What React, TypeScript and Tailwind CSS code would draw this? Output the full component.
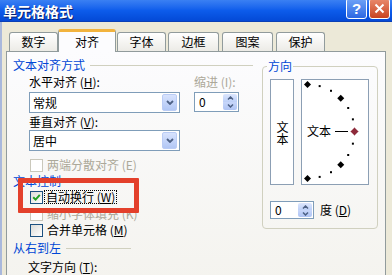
import React from "react";

const U = ({ c }: { c: string }) => <span className="underline">{c}</span>;

function Checkbox({ checked = false, disabled = false }: { checked?: boolean; disabled?: boolean }) {
  return (
    <span
      className={
        disabled
          ? "relative inline-block shrink-0 w-[13px] h-[13px] border border-[#CAC8BB] bg-white"
          : "relative inline-block shrink-0 w-[13px] h-[13px] border border-[#1C5180] bg-gradient-to-br from-[#DCDCD7] to-white"
      }
    >
      {checked && (
        <svg className="absolute left-[1px] top-[1px]" width="9" height="9" viewBox="0 0 9 9">
          <path d="M1.2 4.2 L3.6 6.6 L7.8 1.8" stroke="#21A121" strokeWidth="2" fill="none" />
        </svg>
      )}
    </span>
  );
}

function Select({ value }: { value: string }) {
  return (
    <div className="flex items-center w-[151px] h-[21px] border border-[#7F9DB9] bg-white pl-[3px] pr-[2px]">
      <span className="flex-1">{value}</span>
      <span className="flex items-center justify-center w-[15px] h-[17px] rounded-[2px] border border-[#BACCF5] bg-gradient-to-b from-[#D8E3FD] to-[#B2C7F5]">
        <svg width="8" height="5" viewBox="0 0 8 5">
          <path d="M1 1 L4 4 L7 1" stroke="#4D6185" strokeWidth="1.8" fill="none" />
        </svg>
      </span>
    </div>
  );
}

function Spin({ cls }: { cls: string }) {
  return (
    <div className={cls}>
      <span className="flex-1">0</span>
      <div className="flex flex-col w-[14px] self-stretch my-[1px]">
        <span className="flex-1 flex items-center justify-center rounded-t-[2px] bg-gradient-to-b from-[#DCE6FD] to-[#BDD0F8]">
          <svg width="7" height="4" viewBox="0 0 7 4">
            <path d="M1 3.5 L3.5 1 L6 3.5" stroke="#4D6185" strokeWidth="1.5" fill="none" />
          </svg>
        </span>
        <span className="flex-1 flex items-center justify-center rounded-b-[2px] bg-gradient-to-b from-[#C8D7FA] to-[#AFC4F4]">
          <svg width="7" height="4" viewBox="0 0 7 4">
            <path d="M1 0.5 L3.5 3 L6 0.5" stroke="#4D6185" strokeWidth="1.5" fill="none" />
          </svg>
        </span>
      </div>
    </div>
  );
}

function Tab({ label, cls, selected = false }: { label: string; cls: string; selected?: boolean }) {
  return (
    <div
      className={
        selected
          ? `${cls} relative z-10 h-[23px] -mb-px flex items-center justify-center rounded-t-[3px] border-x border-[#919B9C] border-t-[3px] border-t-[#F2B33D] bg-[#FCFCFE]`
          : `${cls} h-[19px] flex items-center justify-center rounded-t-[3px] border-x border-t border-[#919B9C] bg-gradient-to-b from-white to-[#ECEBE6]`
      }
    >
      {label}
    </div>
  );
}

function Arc() {
  const cx = 5.5;
  const cy = 51.5;
  const r = 47;
  const items: React.ReactNode[] = [];
  for (let a = -90; a <= 90; a += 15) {
    const rad = (a * Math.PI) / 180;
    const x = cx + r * Math.cos(rad);
    const y = cy - r * Math.sin(rad);
    if (a === 0) {
      items.push(
        <polygon
          key={a}
          points={`${x},${y - 4} ${x + 4},${y} ${x},${y + 4} ${x - 4},${y}`}
          fill="#8E2A3A"
          stroke="#C9A0A8"
          strokeWidth="0.6"
        />
      );
    } else if (a % 45 === 0) {
      items.push(
        <polygon key={a} points={`${x},${y - 3.5} ${x + 3.5},${y} ${x},${y + 3.5} ${x - 3.5},${y}`} fill="#000" />
      );
    } else {
      items.push(<rect key={a} x={x - 1} y={y - 1} width="2" height="2" fill="#000" />);
    }
  }
  return (
    <svg width="66" height="104" viewBox="0 0 66 104">
      <text x="5" y="56" fontSize="12" fontFamily="Noto Sans CJK SC, sans-serif" fill="#000">
        文本
      </text>
      <line x1="33" y1="51.5" x2="46" y2="51.5" stroke="#000" strokeWidth="1" />
      {items}
    </svg>
  );
}

export default function App() {
  return (
    <div className="relative w-[392px] h-[275px] overflow-hidden bg-[#ECE9D8] font-['Noto_Sans_CJK_SC',sans-serif] text-[12px] leading-[14px] text-black">
      {/* Title bar */}
      <div className="h-[22px] flex items-start justify-between bg-gradient-to-b from-[#3A80F3] via-[#0D5CEB] to-[#0449D6] border-b border-[#0A3FB5]">
        <span className="pl-[3px] pt-[3px] text-white font-bold text-[14px] leading-[16px] [text-shadow:1px_1px_#0A1F6E]">
          单元格格式
        </span>
        <div className="flex gap-[2px] pr-[2px] -mt-[2px]">
          <div className="w-[21px] h-[21px] rounded-[3px] border border-white bg-gradient-to-b from-[#6FA3F7] to-[#2C67E2] flex items-center justify-center text-white font-bold text-[15px] leading-[15px] font-['Liberation_Sans',sans-serif]">
            ?
          </div>
          <div className="w-[21px] h-[21px] rounded-[3px] border border-white bg-gradient-to-b from-[#E98A6C] to-[#C8421F] flex items-center justify-center">
            <svg width="11" height="11" viewBox="0 0 11 11">
              <path d="M1.5 1.5 L9.5 9.5 M9.5 1.5 L1.5 9.5" stroke="#fff" strokeWidth="2" />
            </svg>
          </div>
        </div>
      </div>

      {/* Body */}
      <div className="flex h-[253px] border-l-2 border-[#A9B8DC]">
        <div className="pl-[4px] pt-[7px] w-[384px]">
          {/* Tabs */}
          <div className="flex items-end h-[22px] pl-[3px]">
            <Tab label="数字" cls="w-[49px]" />
            <Tab label="对齐" cls="w-[58px]" selected />
            <Tab label="字体" cls="ml-[1px] w-[49px]" />
            <Tab label="边框" cls="ml-[2px] w-[51px]" />
            <Tab label="图案" cls="ml-[3px] w-[51px]" />
            <Tab label="保护" cls="ml-[3px] w-[49px]" />
          </div>

          {/* Panel */}
          <div className="flex w-[380px] h-[240px] border border-[#919B9C] bg-gradient-to-b from-[#FCFCFE] to-[#F4F3EE]">
            {/* Left column */}
            <div className="w-[249px] flex flex-col">
              <div className="mt-[6px] pl-[6px] flex items-center h-[14px]">
                <span className="text-[#0046D5]">文本对齐方式</span>
                <div className="ml-[5px] w-[163px] h-px bg-[#D0D0BF]" />
              </div>
              <div className="mt-[3px] pl-[22px] flex h-[14px]">
                <span className="w-[165px]">
                  水平对齐 (<U c="H" />):
                </span>
                <span className="text-[#ACA899]">缩进 (I):</span>
              </div>
              <div className="mt-[3px] pl-[22px] flex items-start">
                <Select value="常规" />
                <Spin cls="ml-[14px] flex items-center w-[45px] h-[20px] border border-[#7F9DB9] bg-white pl-[4px] pr-[1px]" />
              </div>
              <div className="mt-[2px] pl-[22px] h-[14px]">
                垂直对齐 (<U c="V" />):
              </div>
              <div className="mt-[1px] pl-[22px] flex">
                <Select value="居中" />
              </div>
              <div className="mt-[7px] pl-[23px] flex items-center gap-[4px] h-[14px]">
                <Checkbox disabled />
                <span className="text-[#ACA899]">两端分散对齐 (E)</span>
              </div>
              <div className="mt-[2px] pl-[6px] h-[14px] text-[#0046D5]">文本控制</div>
              <div className="mt-[2px] pl-[23px] flex items-center gap-[1px] h-[14px]">
                <Checkbox checked />
                <span className="border border-dotted border-black px-[1px] leading-[12px]">
                  自动换行 (<U c="W" />)
                </span>
              </div>
              <div className="mt-[3px] pl-[23px] flex items-center gap-[4px] h-[14px]">
                <Checkbox disabled />
                <span className="text-[#ACA899]">缩小字体填充 (K)</span>
              </div>
              <div className="mt-[2px] pl-[23px] flex items-center gap-[4px] h-[14px]">
                <Checkbox />
                <span>
                  合并单元格 (<U c="M" />)
                </span>
              </div>
              <div className="mt-[4px] pl-[6px] flex items-center h-[14px]">
                <span className="text-[#0046D5]">从右到左</span>
                <div className="ml-[5px] w-[65px] h-px bg-[#D0D0BF]" />
              </div>
              <div className="mt-[5px] pl-[21px] h-[14px]">
                文字方向 (<U c="T" />):
              </div>
            </div>

            {/* Right: orientation */}
            <fieldset className="ml-[6px] mt-[7px] w-[116px] self-start border border-[#D0D0BF] rounded-[4px] pb-[9px]">
              <legend className="ml-[4px] px-[1px] text-[#0046D5] leading-[14px]">方向</legend>
              <div className="mt-[6px] ml-[7px] flex gap-[7px]">
                <div className="w-[24px] h-[106px] border border-[#8C9FB4] bg-white flex items-center justify-center pt-[1px]">
                  <span className="[writing-mode:vertical-rl] leading-[14px]">文本</span>
                </div>
                <div className="w-[68px] h-[106px] border border-[#8C9FB4] bg-white">
                  <Arc />
                </div>
              </div>
              <div className="mt-[16px] ml-[7px] flex items-center">
                <Spin cls="flex items-center w-[44px] h-[18px] border border-[#7F9DB9] bg-white pl-[4px] pr-[1px]" />
                <span className="ml-[6px]">
                  度 (<U c="D" />)
                </span>
              </div>
            </fieldset>
          </div>
        </div>
      </div>

      {/* Red annotation box */}
      <div className="absolute left-[18px] top-[178px] w-[121px] h-[35px] border-[5px] border-[#E3402B] rounded-[1px]" />
    </div>
  );
}
